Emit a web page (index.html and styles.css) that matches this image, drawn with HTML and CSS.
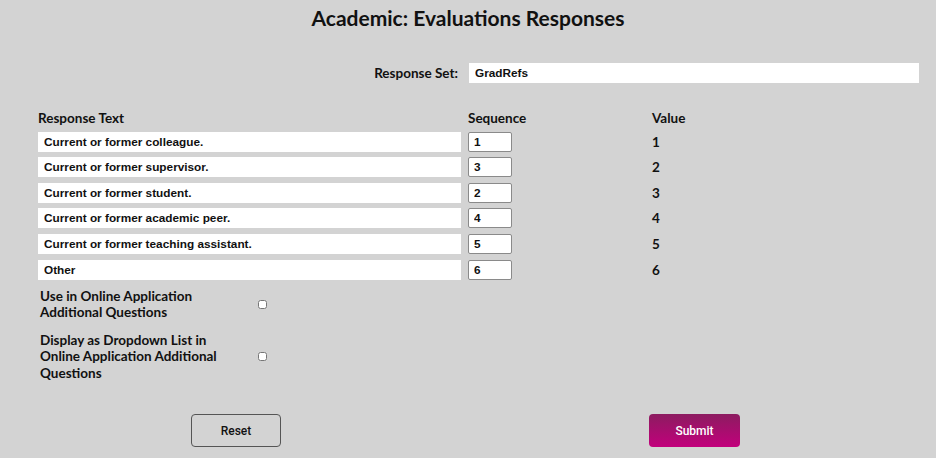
FILE: index.html
```html
<!DOCTYPE html>
<html lang="en">
<head>
    <meta charset="UTF-8">
    <title>Academic: Evaluations Responses</title>
    <link rel="stylesheet" href="styles.css">
</head>
<body>
    <h1 class="page-title">Academic: Evaluations Responses</h1>

    <div class="set-row">
        <label class="set-label" for="responseSet">Response Set:</label>
        <input class="set-input" id="responseSet" type="text" value="GradRefs">
    </div>

    <div class="responses">
        <div class="col-head">Response Text</div>
        <div class="col-head">Sequence</div>
        <div class="col-head">Value</div>

        <input class="text-input" type="text" value="Current or former colleague.">
        <div><input class="seq-input" type="text" value="1"></div>
        <div class="value">1</div>

        <input class="text-input" type="text" value="Current or former supervisor.">
        <div><input class="seq-input" type="text" value="3"></div>
        <div class="value">2</div>

        <input class="text-input" type="text" value="Current or former student.">
        <div><input class="seq-input" type="text" value="2"></div>
        <div class="value">3</div>

        <input class="text-input" type="text" value="Current or former academic peer.">
        <div><input class="seq-input" type="text" value="4"></div>
        <div class="value">4</div>

        <input class="text-input" type="text" value="Current or former teaching assistant.">
        <div><input class="seq-input" type="text" value="5"></div>
        <div class="value">5</div>

        <input class="text-input" type="text" value="Other">
        <div><input class="seq-input" type="text" value="6"></div>
        <div class="value">6</div>
    </div>

    <div class="options">
        <div class="option">
            <span class="option-label">Use in Online Application Additional Questions</span>
            <input class="option-check" type="checkbox">
        </div>
        <div class="option">
            <span class="option-label">Display as Dropdown List in Online Application Additional Questions</span>
            <input class="option-check" type="checkbox">
        </div>
    </div>

    <div class="actions">
        <button class="btn btn-reset">Reset</button>
        <button class="btn btn-submit">Submit</button>
    </div>
</body>
</html>
```

FILE: styles.css
```css
body {
    margin: 0;
    background-color: #d3d3d3;
    font-family: Lato, "DejaVu Sans", sans-serif;
    color: #111;
}

.page-title {
    margin: 6px 0 0;
    text-align: center;
    font-size: 21px;
    line-height: 24px;
    font-weight: bold;
}

.set-row {
    display: flex;
    align-items: center;
    margin-top: 33px;
    padding-right: 17px;
}

.set-label {
    width: 458px;
    text-align: right;
    font-size: 13.5px;
    font-weight: bold;
}

.set-input {
    flex: 1;
    margin-left: 11px;
    height: 20px;
    box-sizing: border-box;
    border: none;
    padding: 0 6px;
    font-family: "Liberation Sans", Arial, sans-serif;
    font-size: 11.8px;
    font-weight: bold;
    color: #111;
}

.responses {
    display: grid;
    grid-template-columns: 423px 177px auto;
    column-gap: 7px;
    row-gap: 5.6px;
    align-items: center;
    margin: 27px 0 0 38px;
}

.col-head {
    font-size: 13.5px;
    font-weight: bold;
    line-height: 16px;
}

.text-input {
    height: 20px;
    box-sizing: border-box;
    border: none;
    padding: 0 6px;
    font-family: "Liberation Sans", Arial, sans-serif;
    font-size: 11.8px;
    font-weight: bold;
    color: #111;
}

.seq-input {
    display: block;
    width: 44px;
    height: 20px;
    box-sizing: border-box;
    border: 1px solid #8a8a8a;
    border-radius: 2px;
    padding: 0 5px;
    font-family: "Liberation Sans", Arial, sans-serif;
    font-size: 11.8px;
    font-weight: bold;
    color: #111;
}

.value {
    font-size: 13.5px;
    font-weight: bold;
}

.options {
    margin: 8px 0 0 40px;
    display: flex;
    flex-direction: column;
    gap: 11px;
}

.option {
    display: flex;
    align-items: center;
}

.option-label {
    width: 200px;
    font-size: 13.5px;
    font-weight: bold;
    line-height: 16.5px;
}

.option-check {
    margin: 0 0 0 18px;
    width: 9px;
    height: 9px;
}

.actions {
    display: flex;
    margin-top: 33px;
    padding-left: 191px;
    gap: 368px;
}

.btn {
    width: 90px;
    height: 33px;
    border-radius: 4px;
    font-family: Roboto, sans-serif;
    font-size: 12px;
    font-weight: 500;
    cursor: pointer;
}

.btn-reset {
    background: transparent;
    border: 1px solid #555;
    color: #111;
}

.btn-submit {
    width: 91px;
    border: none;
    background: linear-gradient(#8c1c60, #c2007c);
    color: #fff;
}
```
